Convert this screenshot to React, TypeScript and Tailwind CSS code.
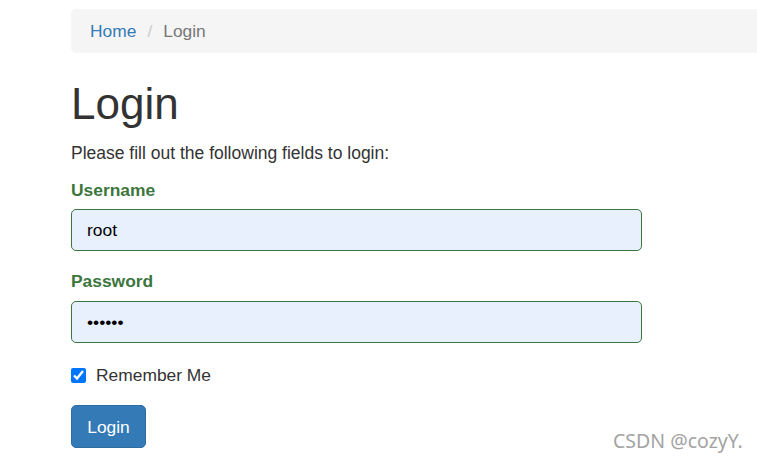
import React from "react";

export default function App() {
  return (
    <div className="relative w-[757px] h-[460px] overflow-hidden bg-white text-[#333] font-['Liberation_Sans',Arial,sans-serif]">
      <div className="pl-[71px] pt-[9px]">
        <ol className="w-[760px] h-[44px] bg-[#f5f5f5] rounded-[5px] px-[19px] flex items-center text-[17.4px] leading-[24px]">
          <li>
            <a className="text-[#337ab7]">Home</a>
          </li>
          <li className="text-[#ccc] px-[11px]">/</li>
          <li className="text-[#777]">Login</li>
        </ol>
        <h1 className="mt-[27px] text-[44px] leading-[48px] font-normal">Login</h1>
        <p className="mt-[13px] text-[17.5px] leading-[24px]">Please fill out the following fields to login:</p>
        <div className="w-[571px]">
          <label className="block mt-[13px] text-[17.4px] leading-[24px] font-bold text-[#3c763d]">Username</label>
          <input
            className="block mt-[7px] w-full h-[42px] px-[15px] rounded-[5px] border border-[#3c763d] bg-[#e8f0fe] text-[17.4px] text-black outline-none"
            defaultValue="root"
          />
          <label className="block mt-[18px] text-[17.4px] leading-[24px] font-bold text-[#3c763d]">Password</label>
          <input
            type="password"
            className="block mt-[8px] w-full h-[42px] px-[15px] rounded-[5px] border border-[#3c763d] bg-[#e8f0fe] text-[17.4px] text-black outline-none"
            defaultValue="123456"
          />
          <label className="mt-[20px] flex items-center h-[24px] text-[17.4px] leading-[24px]">
            <input type="checkbox" defaultChecked className="w-[15px] h-[15px] m-0 accent-[#0075ff]" />
            <span className="ml-[10px]">Remember Me</span>
          </label>
          <button className="mt-[18px] w-[75px] h-[43px] rounded-[5px] bg-[#337ab7] border border-[#2e6da4] text-white text-[17.4px] leading-[24px]">
            Login
          </button>
        </div>
      </div>
      <div className="absolute left-[613px] top-[427px] text-[19.5px] leading-[28px] text-[#a3a3a3] font-['Noto_Sans',sans-serif]">
        CSDN @cozyY.
      </div>
    </div>
  );
}
